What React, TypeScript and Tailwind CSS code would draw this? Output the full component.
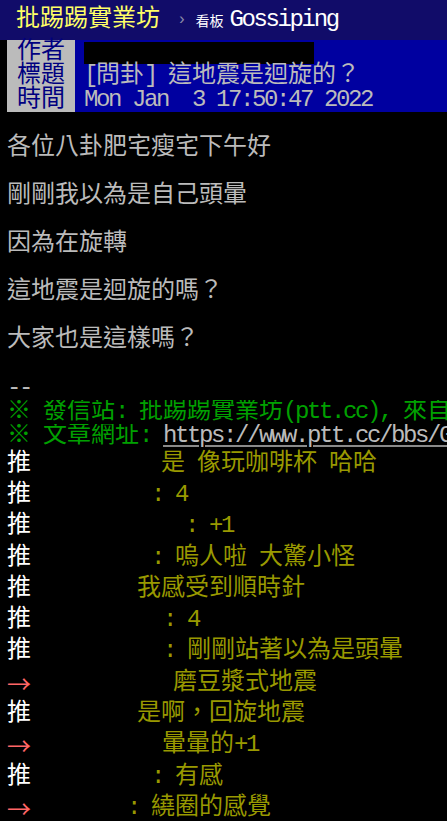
import React from "react"

const ASCII = /([\x20-\x7e]+)/

// half-width runs get squeezed to a 12px cell, like the BBS grid
function Txt({ text }: { text: string }) {
  const parts = text.split(ASCII).filter(Boolean)
  return (
    <>
      {parts.map((p, i) =>
        ASCII.test(p) ? (
          <span key={i} className="tracking-[-2.4px]">
            {p}
          </span>
        ) : (
          <span key={i}>{p}</span>
        )
      )}
    </>
  )
}

interface Push {
  tag: "推" | "→"
  indent: string
  text: string
}

const pushes: Push[] = [
  { tag: "推", indent: "ml-[130px]", text: "是 像玩咖啡杯 哈哈" },
  { tag: "推", indent: "ml-[120px]", text: ": 4" },
  { tag: "推", indent: "ml-[154px]", text: ": +1" },
  { tag: "推", indent: "ml-[120px]", text: ": 嗚人啦 大驚小怪" },
  { tag: "推", indent: "ml-[106px]", text: "我感受到順時針" },
  { tag: "推", indent: "ml-[132px]", text: ": 4" },
  { tag: "推", indent: "ml-[132px]", text: ": 剛剛站著以為是頭暈" },
  { tag: "→", indent: "ml-[142px]", text: "磨豆漿式地震" },
  { tag: "推", indent: "ml-[106px]", text: "是啊，回旋地震" },
  { tag: "→", indent: "ml-[131px]", text: "暈暈的+1" },
  { tag: "推", indent: "ml-[120px]", text: ": 有感" },
  { tag: "→", indent: "ml-[96px]", text: ": 繞圈的感覺" },
]

const body = [
  "各位八卦肥宅瘦宅下午好",
  "剛剛我以為是自己頭暈",
  "因為在旋轉",
  "這地震是迴旋的嗎？",
  "大家也是這樣嗎？",
]

export default function App() {
  return (
    <div className="min-h-screen overflow-hidden bg-black font-['Liberation_Mono','Noto_Sans_CJK_TC',monospace] text-[24px] leading-6">
      {/* Top bar */}
      <div className="flex h-10 items-center whitespace-pre bg-[#110c69] pl-4">
        <span className="text-[#ffff66]">批踢踢實業坊</span>
        <span className="ml-[17px] text-[16px] text-[#8a8aa8]">›</span>
        <span className="ml-[9px] font-['Noto_Sans_CJK_TC',sans-serif] text-[14px] text-white">看板</span>
        <span className="ml-[6px] text-white">
          <Txt text="Gossiping" />
        </span>
      </div>

      {/* Meta lines */}
      <div className="pl-[7px]">
        <div className="flex h-6">
          <span className="bg-[#bbbbbb] px-[10px] text-[#000080]">作者</span>
          <div className="flex-1 bg-[#0000a0] pl-[9px]">
            <div className="mt-[2px] h-[22px] w-[230px] bg-black" />
          </div>
        </div>
        <div className="flex h-6">
          <span className="bg-[#bbbbbb] px-[10px] text-[#000080]">標題</span>
          <span className="flex-1 whitespace-pre bg-[#0000a0] pl-[9px] text-[#bbbbbb]">
            <Txt text="[問卦] 這地震是迴旋的？" />
          </span>
        </div>
        <div className="flex h-6">
          <span className="bg-[#bbbbbb] px-[10px] text-[#000080]">時間</span>
          <span className="flex-1 whitespace-pre bg-[#0000a0] pl-[9px] text-[#bbbbbb]">
            <Txt text="Mon Jan  3 17:50:47 2022" />
          </span>
        </div>
      </div>

      {/* Content */}
      <div className="whitespace-pre pl-[7px] text-[#bbbbbb]">
        <div className="h-6" />
        {body.map((line, i) => (
          <React.Fragment key={i}>
            <div className="h-6">{line}</div>
            <div className="h-6" />
          </React.Fragment>
        ))}
        <div className="h-6">
          <Txt text="--" />
        </div>
        <div className="h-6 overflow-hidden text-[#00a000]">
          <Txt text="※ 發信站: 批踢踢實業坊(ptt.cc), 來自: 1.160.12.34 (臺灣)" />
        </div>
        <div className="h-6 overflow-hidden text-[#00a000]">
          <Txt text="※ 文章網址: " />
          <span className="text-[#bbbbbb] underline decoration-[#8a8a8a] decoration-2 underline-offset-[3px]">
            <Txt text="https://www.ptt.cc/bbs/Gossiping/M.1641203449.A.C1E.html" />
          </span>
        </div>
      </div>

      {/* Pushes */}
      <div className="whitespace-pre">
        {pushes.map((p, i) => (
          <div key={i} className="flex h-[31.3px] items-center">
            {p.tag === "推" ? (
              <span className="ml-[7px] w-6 shrink-0 text-white">推</span>
            ) : (
              <span className="ml-[7px] w-6 shrink-0 font-['Noto_Sans_CJK_TC',sans-serif] text-[#ff6666]">→</span>
            )}
            <span className={`${p.indent} text-[#999900]`}>
              <Txt text={p.text} />
            </span>
          </div>
        ))}
      </div>
    </div>
  )
}
